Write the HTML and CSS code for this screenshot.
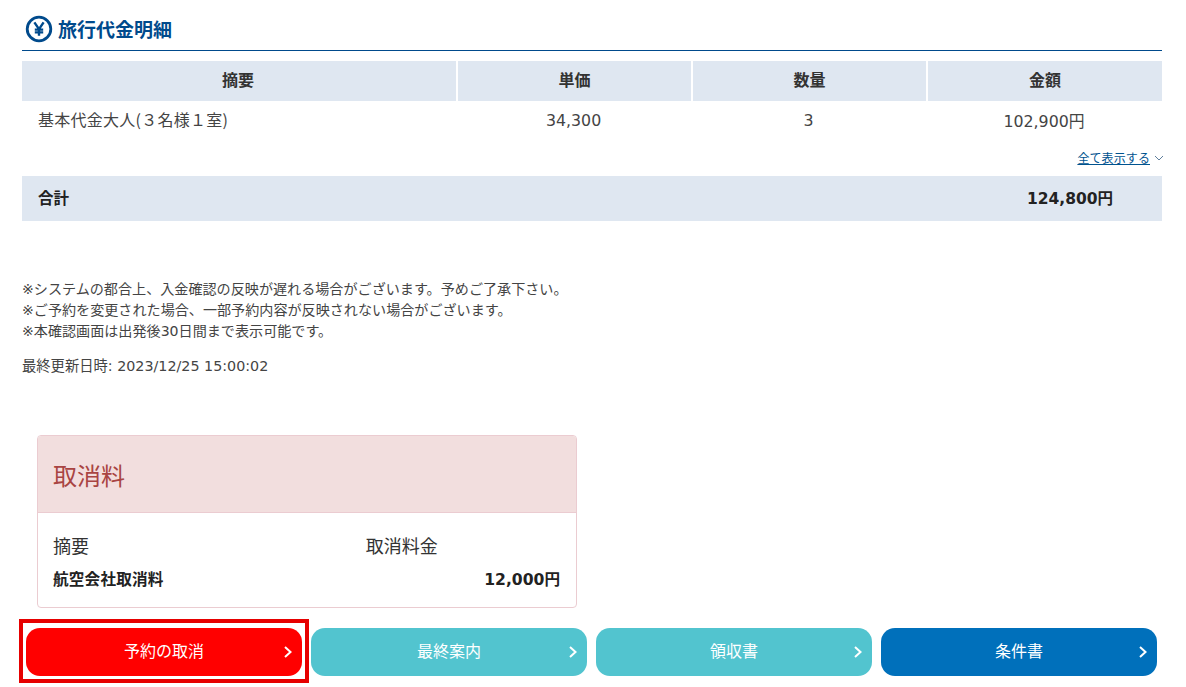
FILE: index.html
```html
<!DOCTYPE html>
<html lang="ja">
<head>
<meta charset="utf-8">
<title>旅行代金明細</title>
<link rel="stylesheet" href="styles.css">
</head>
<body>
<main class="page">
  <h2 class="heading">
    <svg class="yen-icon" viewBox="0 0 28 28" aria-hidden="true">
      <circle cx="14" cy="14" r="11.8" fill="none" stroke="#004a8c" stroke-width="2.8"/>
      <path d="M9.4 7.4 14 14.2 18.6 7.4M14 14.2V20.8M9.8 14.6H18.2M9.8 17.4H18.2" fill="none" stroke="#004a8c" stroke-width="2.4"/>
    </svg>
    <span class="heading-text">旅行代金明細</span>
  </h2>
  <div class="fee-table">
    <div class="th">摘要</div>
    <div class="th">単価</div>
    <div class="th">数量</div>
    <div class="th">金額</div>
    <div class="td td-left">基本代金大人(３名様１室)</div>
    <div class="td">34,300</div>
    <div class="td">3</div>
    <div class="td">102,900円</div>
  </div>
  <div class="show-all">
    <a href="#">全て表示する</a>
    <svg class="chevron-down" viewBox="0 0 10 6" aria-hidden="true"><path d="M1 1 5 5 9 1" fill="none" stroke="#5f7f9c" stroke-width="1"/></svg>
  </div>
  <div class="total">
    <span>合計</span>
    <span>124,800円</span>
  </div>
  <div class="notes">
    <p>※システムの都合上、入金確認の反映が遅れる場合がございます。予めご了承下さい。</p>
    <p>※ご予約を変更された場合、一部予約内容が反映されない場合がございます。</p>
    <p>※本確認画面は出発後30日間まで表示可能です。</p>
  </div>
  <p class="updated">最終更新日時: 2023/12/25 15:00:02</p>
  <section class="panel">
    <h3 class="panel-title">取消料</h3>
    <div class="panel-body">
      <div class="panel-row panel-labels">
        <span class="col-a">摘要</span>
        <span class="col-b">取消料金</span>
      </div>
      <div class="panel-row panel-values">
        <span class="col-a">航空会社取消料</span>
        <span class="col-b amount">12,000円</span>
      </div>
    </div>
  </section>
  <div class="buttons">
    <a class="btn btn-red" href="#">予約の取消<svg class="chev" viewBox="0 0 10 14" aria-hidden="true"><path d="M2 2 7.5 7 2 12" fill="none" stroke="#fff" stroke-width="2"/></svg><span class="highlight"></span></a>
    <a class="btn btn-teal" href="#">最終案内<svg class="chev" viewBox="0 0 10 14" aria-hidden="true"><path d="M2 2 7.5 7 2 12" fill="none" stroke="#fff" stroke-width="2"/></svg></a>
    <a class="btn btn-teal" href="#">領収書<svg class="chev" viewBox="0 0 10 14" aria-hidden="true"><path d="M2 2 7.5 7 2 12" fill="none" stroke="#fff" stroke-width="2"/></svg></a>
    <a class="btn btn-blue" href="#">条件書<svg class="chev" viewBox="0 0 10 14" aria-hidden="true"><path d="M2 2 7.5 7 2 12" fill="none" stroke="#fff" stroke-width="2"/></svg></a>
  </div>
</main>
</body>
</html>
```
FILE: styles.css
```css
* { box-sizing: border-box; }
html, body { margin: 0; padding: 0; background: #fff; }
body {
  font-family: "DejaVu Sans", "Noto Sans CJK JP", sans-serif;
  color: #333;
  overflow: hidden;
}
.page { width: 1186px; height: 687px; padding: 14px 24px 0 22px; }
p { margin: 0; }

.heading {
  display: flex;
  align-items: center;
  gap: 5px;
  height: 37px;
  margin: 0 0 10px;
  padding: 0 0 6px 3px;
  border-bottom: 1px solid #004a8c;
  color: #004a8c;
  font-family: "Noto Sans CJK JP", sans-serif;
  font-size: 19px;
  font-weight: 700;
}
.heading-text { padding-bottom: 2px; }
.yen-icon { width: 28px; height: 28px; flex: none; }

.fee-table {
  display: grid;
  grid-template-columns: 434px 232.5px 232.5px 234px;
  column-gap: 2.33px;
  grid-template-rows: 40px 40px;
}
.th {
  display: flex;
  align-items: center;
  justify-content: center;
  padding-bottom: 4px;
  background: #dfe7f1;
  color: #333;
  font-family: "Noto Sans CJK JP", sans-serif;
  font-size: 16px;
  font-weight: 700;
}
.th:first-child { padding-right: 2px; }
.td {
  display: flex;
  align-items: center;
  justify-content: center;
  padding: 0 2px 2px 0;
  font-size: 15.8px;
  color: #444;
}
.td-left {
  justify-content: flex-start;
  padding: 0 0 4px 16px;
  font-size: 16px;
  letter-spacing: 0.25px;
  font-family: "Noto Sans CJK JP", sans-serif;
}

.show-all {
  display: flex;
  align-items: center;
  justify-content: flex-end;
  gap: 4px;
  height: 35px;
  margin-right: -2px;
  padding-bottom: 2px;
}
.show-all a {
  color: #00538f;
  font-family: "Noto Sans CJK JP", sans-serif;
  font-size: 12px;
  letter-spacing: 0.1px;
  text-decoration: underline;
}
.chevron-down { width: 10px; height: 6px; }

.total {
  display: flex;
  justify-content: space-between;
  align-items: center;
  height: 45px;
  padding: 0 49px 3px 16px;
  background: #dfe7f1;
  font-size: 15.5px;
  font-weight: 700;
  color: #222;
}

.notes {
  margin-top: 58px;
  font-family: "DejaVu Sans", "Noto Sans CJK JP", sans-serif;
  font-size: 14.1px;
  line-height: 21px;
  color: #444;
}
.updated {
  margin-top: 14px;
  font-size: 14.3px;
  line-height: 21px;
  color: #444;
}

.panel {
  width: 540px;
  height: 173px;
  margin: 58px 0 0 15px;
  border: 1px solid #ebccd1;
  border-radius: 4px;
  overflow: hidden;
}
.panel-title {
  display: flex;
  align-items: center;
  height: 77px;
  margin: 0;
  padding-left: 15px;
  background: #f2dede;
  border-bottom: 1px solid #ebccd1;
  color: #a94442;
  font-family: "Noto Sans CJK JP", sans-serif;
  font-size: 24px;
  font-weight: 400;
}
.panel-body { padding: 15px 15px 0; }
.panel-row { display: flex; }
.col-a { width: 314px; }
.col-b { width: 196px; }
.panel-labels {
  height: 36px;
  align-items: center;
  padding-bottom: 2px;
  font-family: "Noto Sans CJK JP", sans-serif;
  font-size: 18px;
  color: #333;
}
.panel-values {
  height: 30px;
  align-items: center;
  padding-bottom: 3px;
  font-size: 15.6px;
  font-weight: 700;
  color: #222;
}
.panel-values .col-a { letter-spacing: 0.2px; }
.amount { text-align: right; padding-right: 1px; }

.buttons {
  display: flex;
  gap: 9px;
  margin-top: 20px;
  padding-left: 4px;
}
.btn {
  position: relative;
  display: flex;
  align-items: center;
  justify-content: center;
  width: 276px;
  height: 48px;
  padding-bottom: 4px;
  border-radius: 14px;
  color: #fff;
  font-family: "Noto Sans CJK JP", sans-serif;
  font-size: 16px;
  text-decoration: none;
}
.btn-red { background: #f00; }
.btn-teal { background: #52c4cf; }
.btn-blue { background: #0070bb; }
.chev {
  position: absolute;
  right: 9px;
  top: 17px;
  width: 10px;
  height: 14px;
}
.highlight {
  position: absolute;
  inset: -9px -7px -7px -7px;
  border: 4px solid #e60000;
}
```
